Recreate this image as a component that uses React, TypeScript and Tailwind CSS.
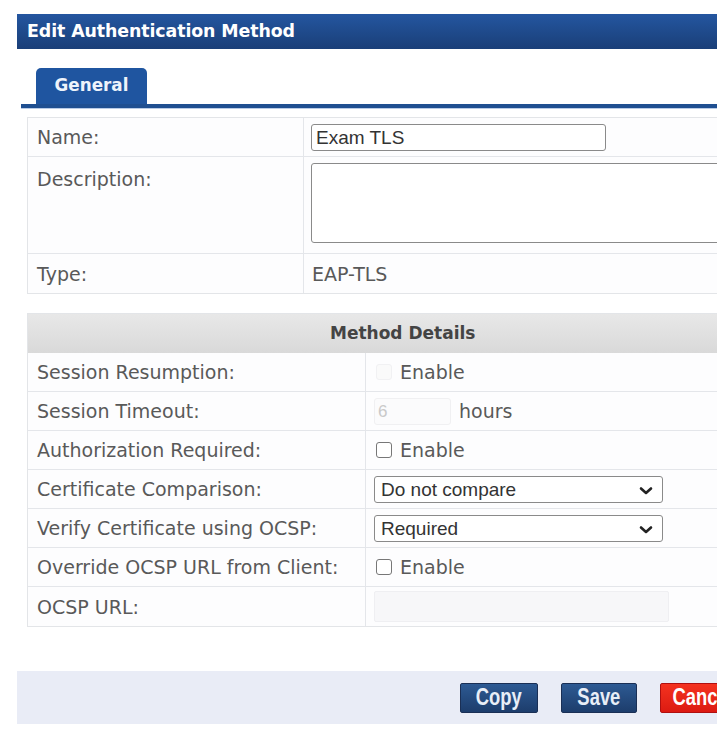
import React from "react";

const labelCls = "font-['DejaVu_Sans',sans-serif] text-[19px] leading-[22px] text-[#595959]";
const fieldFont = "font-['Liberation_Sans',Arial,sans-serif] text-[19px] text-[#333]";
const navyBtn =
  "h-[30px] rounded-[2px] border border-[#1a2f55] bg-gradient-to-b from-[#2d5a93] to-[#1d3d6c] text-[#e8eef7] flex items-center justify-center";

function Chevron() {
  return (
    <svg width="14" height="10" viewBox="0 0 14 10" className="absolute right-[9px] top-[9px]">
      <path d="M2 2.5 L7 7 L12 2.5" fill="none" stroke="#222" strokeWidth="2.6" strokeLinecap="round" strokeLinejoin="round" />
    </svg>
  );
}

function Select({ value }: { value: string }) {
  return (
    <div className={`relative w-[289px] h-[27px] rounded-[3px] border border-[#8a8a8a] bg-white pl-[6px] leading-[25px] ${fieldFont}`}>
      {value}
      <Chevron />
    </div>
  );
}

function Checkbox({ disabled }: { disabled?: boolean }) {
  return (
    <span
      className={`inline-block w-[16px] h-[16px] rounded-[3px] border ${
        disabled ? "border-[#f1f1f3] bg-[#fafafa]" : "border-[#777] bg-white"
      }`}
    />
  );
}

function BtnLabel({ children }: { children: React.ReactNode }) {
  return (
    <span className="inline-block scale-x-[0.8] font-['Liberation_Sans',Arial,sans-serif] font-bold text-[23px] leading-none">
      {children}
    </span>
  );
}

function DetailRow({ label, children, last }: { label: string; children: React.ReactNode; last?: boolean }) {
  return (
    <div className={`flex h-[39px] ${last ? "" : "border-b border-[#e4e6ea]"}`}>
      <div className={`w-[338px] shrink-0 border-r border-[#e4e6ea] pl-[9px] flex items-center ${labelCls}`}>{label}</div>
      <div className="flex-1 flex items-center pl-[8px]">{children}</div>
    </div>
  );
}

export default function App() {
  return (
    <div className="w-[717px] h-[740px] overflow-hidden bg-white">
      <div className="w-[800px] ml-[17px] pt-[14px]">
        <div className="h-[35px] bg-gradient-to-b from-[#2456a0] to-[#1a3f78] flex items-center pl-[10px]">
          <span className="font-['DejaVu_Sans',sans-serif] font-bold text-[17.4px] text-white tracking-[-0.1px]">
            Edit Authentication Method
          </span>
        </div>

        <div className="mt-[19px] ml-[19px] w-[111px] h-[36px] rounded-t-[5px] bg-[#1f55a0] flex items-center justify-center">
          <span className="font-['DejaVu_Sans',sans-serif] font-bold text-[16.8px] text-[#eef3fb]">General</span>
        </div>
        <div className="ml-[4px] h-[4px] bg-[#1f4f91]" />
        <div className="ml-[4px] h-[1px] bg-[#b9cbe6]" />

        <div className="ml-[10px] mt-[8px] border border-[#e3e5e8] bg-[#fdfdfe]">
          <div className="flex h-[39px] border-b border-[#e4e6ea]">
            <div className={`w-[276px] shrink-0 border-r border-[#e4e6ea] pl-[9px] flex items-center ${labelCls}`}>Name:</div>
            <div className="flex-1 flex items-center pl-[7px]">
              <div className={`w-[295px] h-[27px] rounded-[3px] border border-[#8a8a8a] bg-white pl-[4px] leading-[25px] ${fieldFont}`}>
                Exam TLS
              </div>
            </div>
          </div>
          <div className="flex h-[97px] border-b border-[#e4e6ea]">
            <div className={`w-[276px] shrink-0 border-r border-[#e4e6ea] pl-[9px] pt-[11px] ${labelCls}`}>Description:</div>
            <div className="flex-1 pl-[7px] pt-[6px]">
              <div className="w-[500px] h-[80px] rounded-[3px] border border-[#8a8a8a] bg-white" />
            </div>
          </div>
          <div className="flex h-[39px]">
            <div className={`w-[276px] shrink-0 border-r border-[#e4e6ea] pl-[9px] flex items-center ${labelCls}`}>Type:</div>
            <div className={`flex-1 flex items-center pl-[8px] ${labelCls}`}>EAP-TLS</div>
          </div>
        </div>

        <div className="ml-[10px] mt-[19px] border border-[#e3e5e8] bg-[#fdfdfe]">
          <div className="h-[39px] bg-gradient-to-b from-[#e8e8e8] to-[#d9d9d9] flex items-center pl-[302px]">
            <span className="font-['DejaVu_Sans',sans-serif] font-bold text-[17px] text-[#444]">Method Details</span>
          </div>
          <DetailRow label="Session Resumption:">
            <div className={`flex items-center gap-[8px] pl-[2px] ${labelCls}`}>
              <Checkbox disabled />
              <span>Enable</span>
            </div>
          </DetailRow>
          <DetailRow label="Session Timeout:">
            <div className={`flex items-center gap-[8px] ${labelCls}`}>
              <div className="w-[77px] h-[27px] rounded-[3px] border border-[#f0f0f2] bg-[#fbfbfc] pl-[3px] leading-[25px] font-['Liberation_Sans',Arial,sans-serif] text-[17px] text-[#c9c9c9]">
                6
              </div>
              <span>hours</span>
            </div>
          </DetailRow>
          <DetailRow label="Authorization Required:">
            <div className={`flex items-center gap-[8px] pl-[2px] ${labelCls}`}>
              <Checkbox />
              <span>Enable</span>
            </div>
          </DetailRow>
          <DetailRow label="Certificate Comparison:">
            <Select value="Do not compare" />
          </DetailRow>
          <DetailRow label="Verify Certificate using OCSP:">
            <Select value="Required" />
          </DetailRow>
          <DetailRow label="Override OCSP URL from Client:">
            <div className={`flex items-center gap-[8px] pl-[2px] ${labelCls}`}>
              <Checkbox />
              <span>Enable</span>
            </div>
          </DetailRow>
          <DetailRow label="OCSP URL:" last>
            <div className="w-[295px] h-[31px] rounded-[2px] border border-[#efeff2] bg-[#f7f7f9]" />
          </DetailRow>
        </div>

        <div className="mt-[44px] h-[53px] bg-[#e9ecf6] flex items-center gap-[23px] pl-[443px]">
          <button className={`w-[78px] ${navyBtn}`}>
            <BtnLabel>Copy</BtnLabel>
          </button>
          <button className={`w-[76px] ${navyBtn}`}>
            <BtnLabel>Save</BtnLabel>
          </button>
          <button className="w-[92px] h-[30px] rounded-[2px] border border-[#b01010] bg-gradient-to-b from-[#f4321f] to-[#dc1a12] text-white flex items-center justify-start pl-[4px]">
            <BtnLabel>Cancel</BtnLabel>
          </button>
        </div>
      </div>
    </div>
  );
}
